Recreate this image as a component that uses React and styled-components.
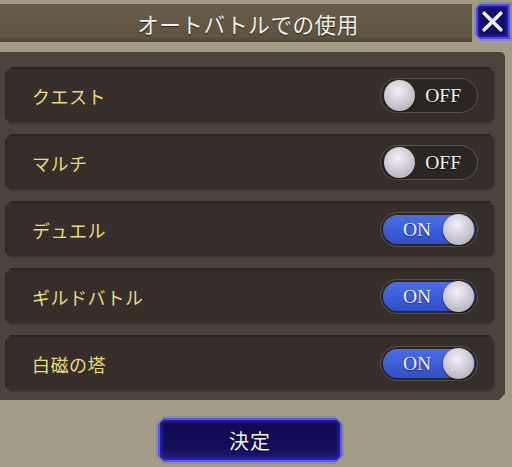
import styled, { createGlobalStyle } from "styled-components";

const GlobalStyle = createGlobalStyle`
  html, body {
    margin: 0;
    padding: 0;
    background: #a29c86;
    overflow: hidden;
  }
  body {
    font-family: "Noto Sans CJK JP", "Noto Sans", sans-serif;
  }
`;

const Page = styled.div`
  width: 512px;
  height: 467px;
  display: flex;
  flex-direction: column;
`;

const Header = styled.div`
  height: 42px;
  display: flex;
  align-items: flex-start;
`;

const TitleBar = styled.div`
  flex: 1;
  height: 38px;
  margin-top: 4px;
  padding-left: 24px;
  display: flex;
  align-items: center;
  justify-content: center;
  background: linear-gradient(#675d48, #5e5441 85%, #4f4637);
  color: #f4f1ea;
  font-size: 21.5px;
  letter-spacing: 0.6px;
  text-shadow: 0 1px 1px rgba(0, 0, 0, 0.6);
`;

const CloseButton = styled.div`
  width: 38px;
  height: 39px;
  margin-top: 2px;
  margin-left: 2px;
  padding: 2px;
  box-sizing: border-box;
  background: #8a8aa8;
  clip-path: polygon(6px 0, 100% 0, 100% 100%, 6px 100%, 0 calc(100% - 6px), 0 6px);
  display: flex;
`;

const CloseInner = styled.div`
  flex: 1;
  display: flex;
  align-items: center;
  justify-content: center;
  background: radial-gradient(circle at 50% 50%, #1a1480 0%, #0d0a50 70%);
  box-shadow: inset 0 0 0 2px #4b4cf4, inset 0 0 4px 3px #2b2cc8;
  clip-path: polygon(5px 0, 100% 0, 100% 100%, 5px 100%, 0 calc(100% - 5px), 0 5px);
  padding-right: 2px;
`;

const Panel = styled.div`
  margin-top: 10px;
  width: 505px;
  box-sizing: border-box;
  padding: 15px 10px 8px 5px;
  background: #4b443c;
  border-top-right-radius: 5px;
  clip-path: polygon(0 0, 100% 0, 100% calc(100% - 6px), calc(100% - 6px) 100%, 0 100%);
  display: flex;
  flex-direction: column;
  gap: 10px;
`;

const Row = styled.div`
  height: 57px;
  display: flex;
  align-items: center;
  justify-content: space-between;
  padding: 0 17px 0 27px;
  background: #352e2a;
  clip-path: polygon(6px 0, calc(100% - 6px) 0, 100% 6px, 100% calc(100% - 6px), calc(100% - 6px) 100%, 6px 100%, 0 calc(100% - 6px), 0 6px);
  box-shadow: inset 0 2px 0 #2b2521, inset 2px 0 0 #2e2823, inset 0 -2px 0 #3f3832, inset -2px 0 0 #3c352f;
`;

const Label = styled.span`
  color: #e9da7c;
  font-size: 18px;
  letter-spacing: 0.5px;
`;

const Toggle = styled.div`
  width: 98px;
  height: 35px;
  box-sizing: border-box;
  border-radius: 18px;
  border: 1px solid #5b534a;
  background: #2c2622;
  padding: 2px;
  display: flex;
`;

const Track = styled.div`
  flex: 1;
  border-radius: 15px;
  display: flex;
  align-items: center;
  flex-direction: ${(p) => (p.$on ? "row" : "row-reverse")};
  justify-content: space-between;
  padding: ${(p) => (p.$on ? "0 1px 0 20px" : "0 14px 0 1px")};
  background: ${(p) =>
    p.$on ? "linear-gradient(#4b6ee6, #3a5bd4 60%, #3250c4)" : "transparent"};
`;

const ToggleText = styled.span`
  font-family: "Liberation Serif", "DejaVu Serif", serif;
  font-size: 19.5px;
  color: #f3f1f4;
  text-shadow: 0 1px 1px rgba(0, 0, 0, 0.6);
`;

const Knob = styled.div`
  width: 31px;
  height: 31px;
  border-radius: 50%;
  background: radial-gradient(circle at 45% 35%, #f3f0f6 0%, #d2ccd8 45%, #a9a2b2 100%);
  box-shadow: 0 1px 2px rgba(0, 0, 0, 0.6);
`;

const Footer = styled.div`
  flex: 1;
  display: flex;
  justify-content: center;
  align-items: flex-start;
  padding: 16px 12px 0 0;
`;

const ConfirmButton = styled.div`
  width: 188px;
  height: 48px;
  flex-shrink: 0;
  padding: 2px;
  box-sizing: border-box;
  background: #8d8c9c;
  clip-path: polygon(8px 0, calc(100% - 8px) 0, 100% 8px, 100% calc(100% - 8px), calc(100% - 8px) 100%, 8px 100%, 0 calc(100% - 8px), 0 8px);
  display: flex;
`;

const ConfirmInner = styled.div`
  flex: 1;
  display: flex;
  align-items: center;
  justify-content: center;
  background: linear-gradient(#0d0848, #150f5c 70%, #221a8a);
  box-shadow: inset 0 0 0 2px #5656ff, inset 0 0 5px 3px #2f2ed0;
  clip-path: polygon(7px 0, calc(100% - 7px) 0, 100% 7px, 100% calc(100% - 7px), calc(100% - 7px) 100%, 7px 100%, 0 calc(100% - 7px), 0 7px);
  color: #f5f3f0;
  font-size: 20px;
  letter-spacing: 1px;
  text-shadow: 0 1px 1px rgba(0, 0, 0, 0.7);
`;

const settings = [
  { label: "クエスト", on: false },
  { label: "マルチ", on: false },
  { label: "デュエル", on: true },
  { label: "ギルドバトル", on: true },
  { label: "白磁の塔", on: true },
];

const App = () => {
  return (
    <Page>
      <GlobalStyle />
      <Header>
        <TitleBar>オートバトルでの使用</TitleBar>
        <CloseButton>
          <CloseInner>
            <svg width="23" height="23" viewBox="0 0 22 22">
              <path
                d="M3 3 L19 19 M19 3 L3 19"
                stroke="#f4f2fa"
                strokeWidth="3.4"
                strokeLinecap="round"
              />
            </svg>
          </CloseInner>
        </CloseButton>
      </Header>
      <Panel>
        {settings.map((s) => (
          <Row key={s.label}>
            <Label>{s.label}</Label>
            <Toggle>
              <Track $on={s.on}>
                <ToggleText>{s.on ? "ON" : "OFF"}</ToggleText>
                <Knob />
              </Track>
            </Toggle>
          </Row>
        ))}
      </Panel>
      <Footer>
        <ConfirmButton>
          <ConfirmInner>決定</ConfirmInner>
        </ConfirmButton>
      </Footer>
    </Page>
  );
};

export default App;
